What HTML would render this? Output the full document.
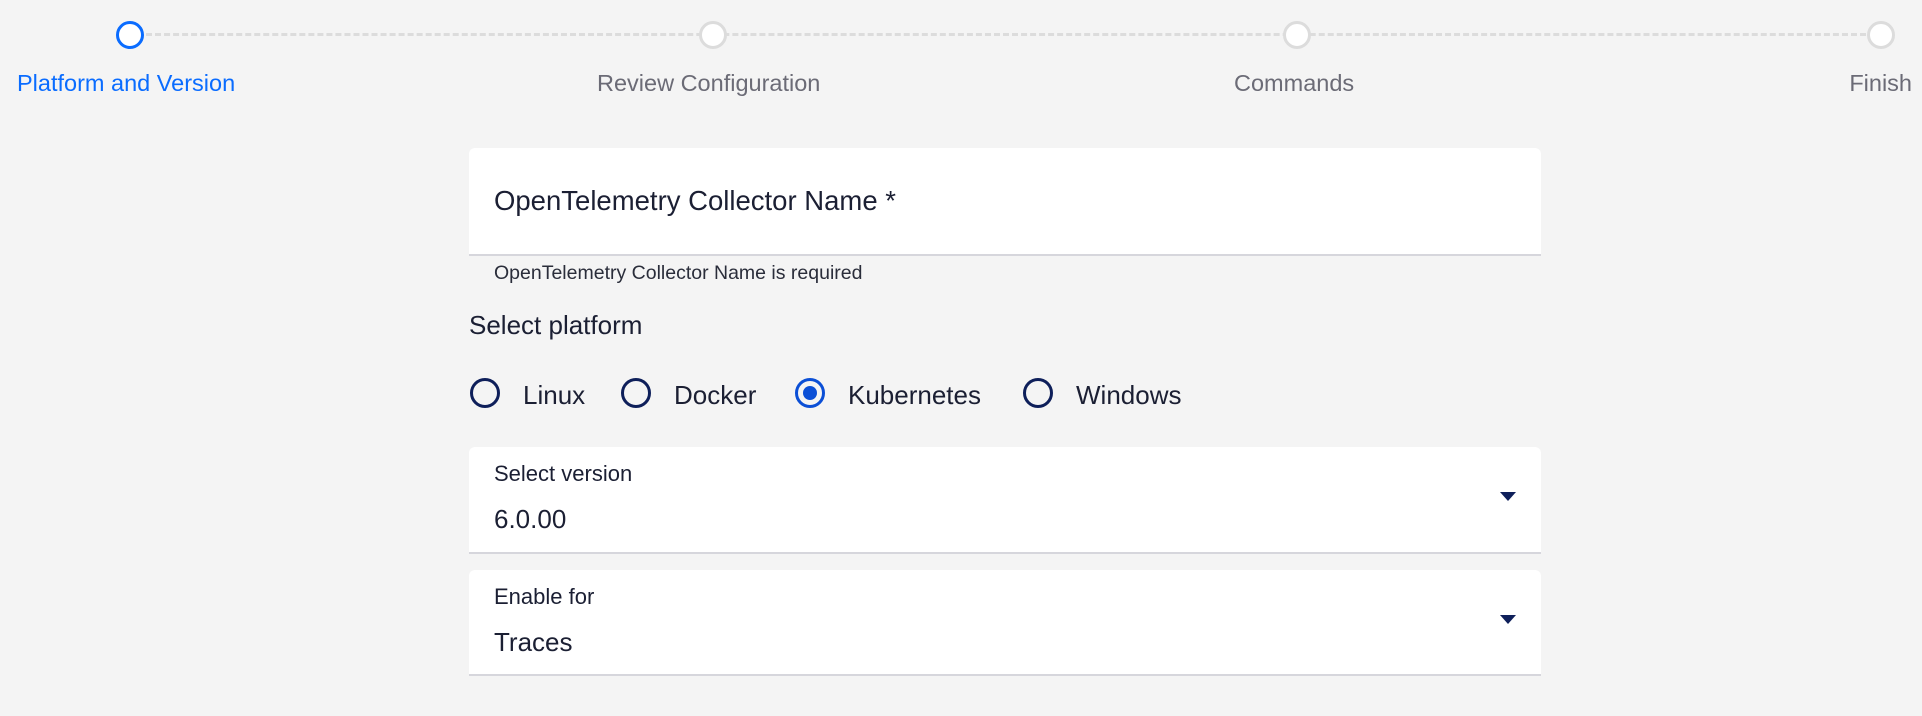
<!DOCTYPE html>
<html><head><meta charset="utf-8"><style>
body{margin:0;width:1922px;height:716px;background:#f4f4f4;font-family:"Liberation Sans",sans-serif;position:relative;overflow:hidden;color:#1b1f33}
.a{position:absolute;white-space:nowrap}
.line{position:absolute;top:33px;height:0;border-top:3px dashed #dcdcdc}
.step{position:absolute;top:21px;width:22px;height:22px;border-radius:50%;border:3px solid #dcdcdc;background:#fff}
.lbl{font-size:23.5px;color:#6b6b76;top:70px}
.card{position:absolute;left:469px;width:1072px;background:#fff;border-radius:6px 6px 0 0;border-bottom:2px solid #d6d6dc}
.radio{position:absolute;top:378px;width:30px;height:30px;border-radius:50%;border:3px solid #0e1f5a;box-sizing:border-box}
.rt{top:380px;font-size:26px}
.arr{position:absolute;width:0;height:0;border-left:8px solid transparent;border-right:8px solid transparent;border-top:9px solid #0e1f5a}
</style></head><body>
<div class="line" style="left:146px;width:1720px"></div>
<div class="step" style="left:116px;border-color:#0a6cff"></div>
<div class="step" style="left:699px"></div>
<div class="step" style="left:1283px"></div>
<div class="step" style="left:1867px"></div>
<div class="a lbl" style="left:17px;color:#0a6cff">Platform and Version</div>
<div class="a lbl" style="left:597px">Review Configuration</div>
<div class="a lbl" style="left:1234px">Commands</div>
<div class="a lbl" style="right:10px">Finish</div>

<div class="card" style="top:148px;height:106px"></div>
<div class="a" style="left:494px;top:185px;font-size:27.5px">OpenTelemetry Collector Name *</div>
<div class="a" style="left:494px;top:262px;font-size:19.5px;color:#2a2d3a">OpenTelemetry Collector Name is required</div>
<div class="a" style="left:469px;top:310px;font-size:26px">Select platform</div>

<div class="radio" style="left:470px"></div><div class="a rt" style="left:523px">Linux</div>
<div class="radio" style="left:621px"></div><div class="a rt" style="left:674px">Docker</div>
<div class="radio" style="left:795px;border-color:#0b4fd6"><div style="position:absolute;left:5px;top:5px;width:14px;height:14px;border-radius:50%;background:#0b4fd6"></div></div><div class="a rt" style="left:848px">Kubernetes</div>
<div class="radio" style="left:1023px"></div><div class="a rt" style="left:1076px">Windows</div>

<div class="card" style="top:447px;height:105px"></div>
<div class="a" style="left:494px;top:461px;font-size:22px">Select version</div>
<div class="a" style="left:494px;top:504px;font-size:26px">6.0.00</div>
<div class="arr" style="left:1500px;top:492px"></div>

<div class="card" style="top:570px;height:104px"></div>
<div class="a" style="left:494px;top:584px;font-size:22px">Enable for</div>
<div class="a" style="left:494px;top:627px;font-size:26px">Traces</div>
<div class="arr" style="left:1500px;top:615px"></div>
</body></html>
